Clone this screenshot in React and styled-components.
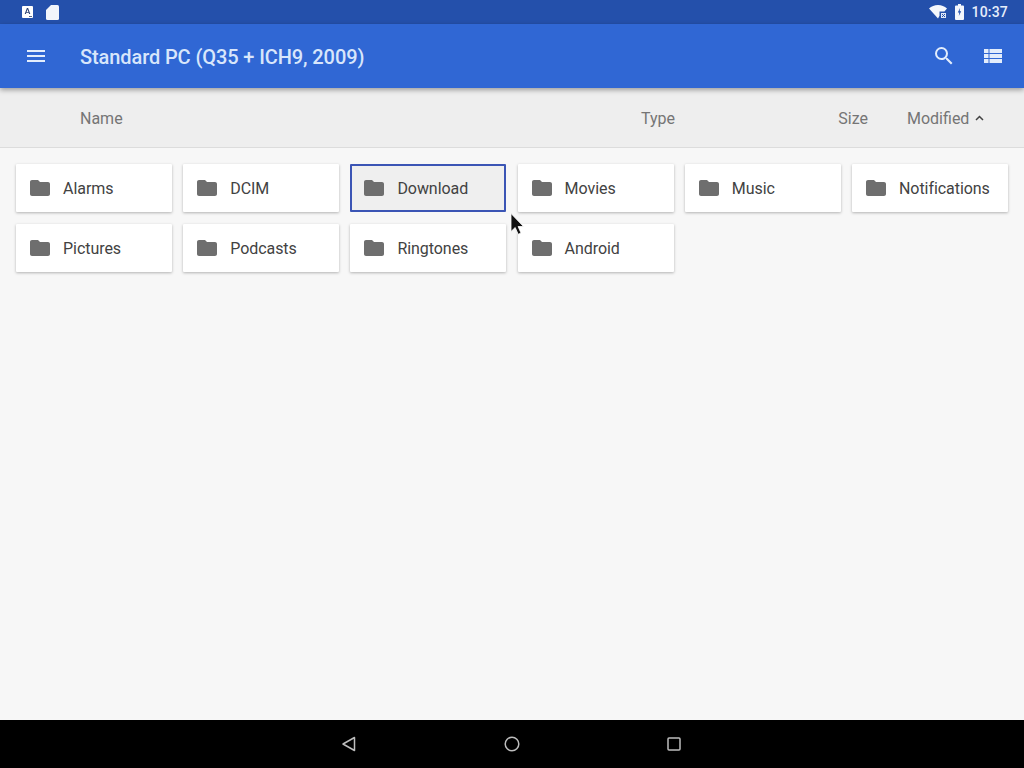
import React from 'react'
import styled, { createGlobalStyle } from 'styled-components'

const GlobalStyle = createGlobalStyle`
	html, body {
		margin: 0;
		padding: 0;
		background: #f7f7f7;
		font-family: Roboto, "Liberation Sans", sans-serif;
	}
`

const Screen = styled.div`
	position: relative;
	width: 1024px;
	height: 768px;
	display: flex;
	flex-direction: column;
	overflow: hidden;
	background: #f7f7f7;
`

const StatusBar = styled.div`
	height: 24px;
	flex: none;
	display: flex;
	align-items: center;
	padding: 0 16px 0 22px;
	background: #2450ab;
	color: #e6edfa;
`

const StatusLeft = styled.div`
	display: flex;
	align-items: center;
	gap: 13px;
`

const StatusRight = styled.div`
	margin-left: auto;
	display: flex;
	align-items: center;
	gap: 7px;
`

const Clock = styled.span`
	font-size: 14px;
	font-weight: 500;
	letter-spacing: 0.2px;
`

const BatteryIcon = styled.svg`
	margin-left: 1px;
`

const Toolbar = styled.div`
	position: relative;
	z-index: 1;
	height: 64px;
	flex: none;
	display: flex;
	align-items: center;
	padding: 0 22px 0 26px;
	background: #3067d4;
	box-shadow: 0 2px 5px rgba(0, 0, 0, 0.35);
	color: #e3edfc;
`

const Title = styled.div`
	margin-left: 34px;
	padding-top: 2px;
	font-size: 20px;
	font-weight: 500;
	letter-spacing: -0.1px;
	color: #d8e6fb;
`

const ToolbarActions = styled.div`
	margin-left: auto;
	display: flex;
	align-items: center;
	gap: 28px;
`

const SortHeader = styled.div`
	box-sizing: border-box;
	height: 60px;
	flex: none;
	display: flex;
	align-items: center;
	padding-top: 1px;
	background: #eeeeee;
	border-bottom: 1px solid #dcdcdc;
	font-size: 16px;
	color: #757575;
`

const Column = styled.div`
	width: ${props => props.width}px;
	flex: none;
	display: flex;
	align-items: center;
	justify-content: ${props => (props.end ? 'flex-end' : 'flex-start')};
`

const SortArrow = styled.svg`
	margin-left: 6px;
`

const Grid = styled.div`
	flex: 1;
	display: grid;
	grid-template-columns: repeat(6, 156px);
	grid-auto-rows: 48px;
	column-gap: 11.2px;
	row-gap: 12px;
	align-content: start;
	padding: 16px;
`

const Card = styled.div`
	box-sizing: border-box;
	display: flex;
	align-items: center;
	gap: 11px;
	padding-left: ${props => (props.focused ? '10px' : '12px')};
	background: ${props => (props.focused ? '#efefef' : '#ffffff')};
	border: ${props => (props.focused ? '2px solid #3b55b5' : 'none')};
	border-radius: 1px;
	box-shadow: ${props => (props.focused ? 'none' : '0 1px 3px rgba(0, 0, 0, 0.28)')};
	font-size: 16px;
	letter-spacing: -0.05px;
	color: #424242;
`

const NavBar = styled.div`
	height: 48px;
	flex: none;
	display: flex;
	align-items: center;
	justify-content: center;
	gap: 147px;
	padding-right: 2px;
	background: #000000;
	color: #bdbdbd;
`

const Cursor = styled.svg`
	position: absolute;
	left: 508px;
	top: 212px;
`

const FolderIcon = () => (
	<svg width="24" height="24" viewBox="0 0 24 24" fill="#6e6e6e">
		<path d="M10 4H4c-1.1 0-2 .9-2 2v12c0 1.1.9 2 2 2h16c1.1 0 2-.9 2-2V8c0-1.1-.9-2-2-2h-8l-2-2z" />
	</svg>
)

const AlphaIcon = () => (
	<svg width="11" height="12" viewBox="0 0 11 12">
		<rect width="11" height="12" rx="1" fill="#ffffff" />
		<path d="M2.700 8 4.900 2h1.200l2.200 6H7.100l-.4-1.200H4.300L3.900 8zM4.600 5.900h1.800L5.500 3.200z" fill="#2a3f70" />
		<path d="M7 10h3v.8H7z" fill="#2a3f70" />
	</svg>
)

const SdIcon = () => (
	<svg width="13" height="15" viewBox="0 0 13 15" fill="#f2f5fb">
		<path d="M5 0h6.500A1.500 1.500 0 0 1 13 1.500v12a1.500 1.500 0 0 1-1.500 1.500h-10A1.500 1.500 0 0 1 0 13.500V5z" />
	</svg>
)

const WifiIcon = () => (
	<svg width="18" height="14" viewBox="0 0 18 14">
		<path d="M9 13.500 0 3.400C2.400 1.400 5.600 0 9 0s6.600 1.400 9 3.400l-2.600 3H10.500v4.300z" fill="#f4f7fc" />
		<path d="M12 8h5v5h-5z" fill="#dfe7f6" />
		<path d="m13 9 3 3m0-3-3 3" stroke="#2450ab" strokeWidth="1" />
	</svg>
)

const MenuIcon = () => (
	<svg width="20" height="14" viewBox="0 0 20 14" fill="currentColor">
		<path d="M1 1h18v2H1zM1 6h18v2H1zM1 11h18v2H1z" />
	</svg>
)

const SearchIcon = () => (
	<svg width="24" height="24" viewBox="0 0 24 24" fill="currentColor">
		<path d="M15.500 14h-.79l-.28-.27A6.470 6.470 0 0 0 16 9.500 6.500 6.500 0 1 0 9.500 16c1.610 0 3.090-.59 4.230-1.570l.27.28v.79l5 4.990L20.490 19l-4.990-5zm-6 0C7.010 14 5 11.990 5 9.500S7.010 5 9.500 5 14 7.010 14 9.500 11.990 14 9.500 14z" />
	</svg>
)

const ListIcon = () => (
	<svg width="18" height="16" viewBox="0 0 18 16" fill="currentColor">
		<path d="M0 1h4.500v4H0zM5.500 1H18v4H5.500zM0 6h4.500v4H0zM5.500 6H18v4H5.500zM0 11h4.500v4H0zM5.500 11H18v4H5.500z" />
	</svg>
)

const BackIcon = () => (
	<svg width="16" height="16" viewBox="0 0 16 16" fill="none" stroke="currentColor" strokeWidth="1.500" strokeLinejoin="round">
		<path d="M13.500 1.500v13L2 8z" />
	</svg>
)

const HomeIcon = () => (
	<svg width="16" height="16" viewBox="0 0 16 16" fill="none" stroke="currentColor" strokeWidth="1.500">
		<circle cx="8" cy="8" r="6.800" />
	</svg>
)

const RecentIcon = () => (
	<svg width="14" height="14" viewBox="0 0 14 14" fill="none" stroke="currentColor" strokeWidth="1.500">
		<rect x="1" y="1" width="12" height="12" rx="1" />
	</svg>
)

const folders = ['Alarms', 'DCIM', 'Download', 'Movies', 'Music', 'Notifications', 'Pictures', 'Podcasts', 'Ringtones', 'Android']

const App = () => (
	<Screen>
		<GlobalStyle />
		<StatusBar>
			<StatusLeft>
				<AlphaIcon />
				<SdIcon />
			</StatusLeft>
			<StatusRight>
				<WifiIcon />
				<BatteryIcon width="9" height="16" viewBox="0 0 9 16">
					<path d="M3 0h3v1.500h2a1 1 0 0 1 1 1V15a1 1 0 0 1-1 1H1a1 1 0 0 1-1-1V2.500a1 1 0 0 1 1-1h2z" fill="#f4f7fc" />
					<path d="M5 4 2.800 8.500h1.500L3.800 12l2.400-4.800H4.700z" fill="#2450ab" />
				</BatteryIcon>
				<Clock>10:37</Clock>
			</StatusRight>
		</StatusBar>
		<Toolbar>
			<MenuIcon />
			<Title>Standard PC (Q35 + ICH9, 2009)</Title>
			<ToolbarActions>
				<SearchIcon />
				<ListIcon />
			</ToolbarActions>
		</Toolbar>
		<SortHeader>
			<Column width={80} />
			<Column width={561}>Name</Column>
			<Column width={120}>Type</Column>
			<Column width={107} end>Size</Column>
			<Column width={39} />
			<Column width={100}>
				Modified
				<SortArrow width="9" height="6" viewBox="0 0 9 6" fill="none" stroke="#424242" strokeWidth="1.500">
					<path d="M1 5l3.500-3.500L8 5" />
				</SortArrow>
			</Column>
		</SortHeader>
		<Grid>
			{folders.map(name => (
				<Card key={name} focused={name === 'Download'}>
					<FolderIcon />
					{name}
				</Card>
			))}
		</Grid>
		<NavBar>
			<BackIcon />
			<HomeIcon />
			<RecentIcon />
		</NavBar>
		<Cursor width="17" height="25" viewBox="0 0 17 25">
			<path d="M3 1.500v18l4.200-4 3 6.800 2.800-1.300-2.900-6.500h5.400z" fill="#111111" stroke="#ffffff" strokeWidth="0.800" />
		</Cursor>
	</Screen>
)

export default App
